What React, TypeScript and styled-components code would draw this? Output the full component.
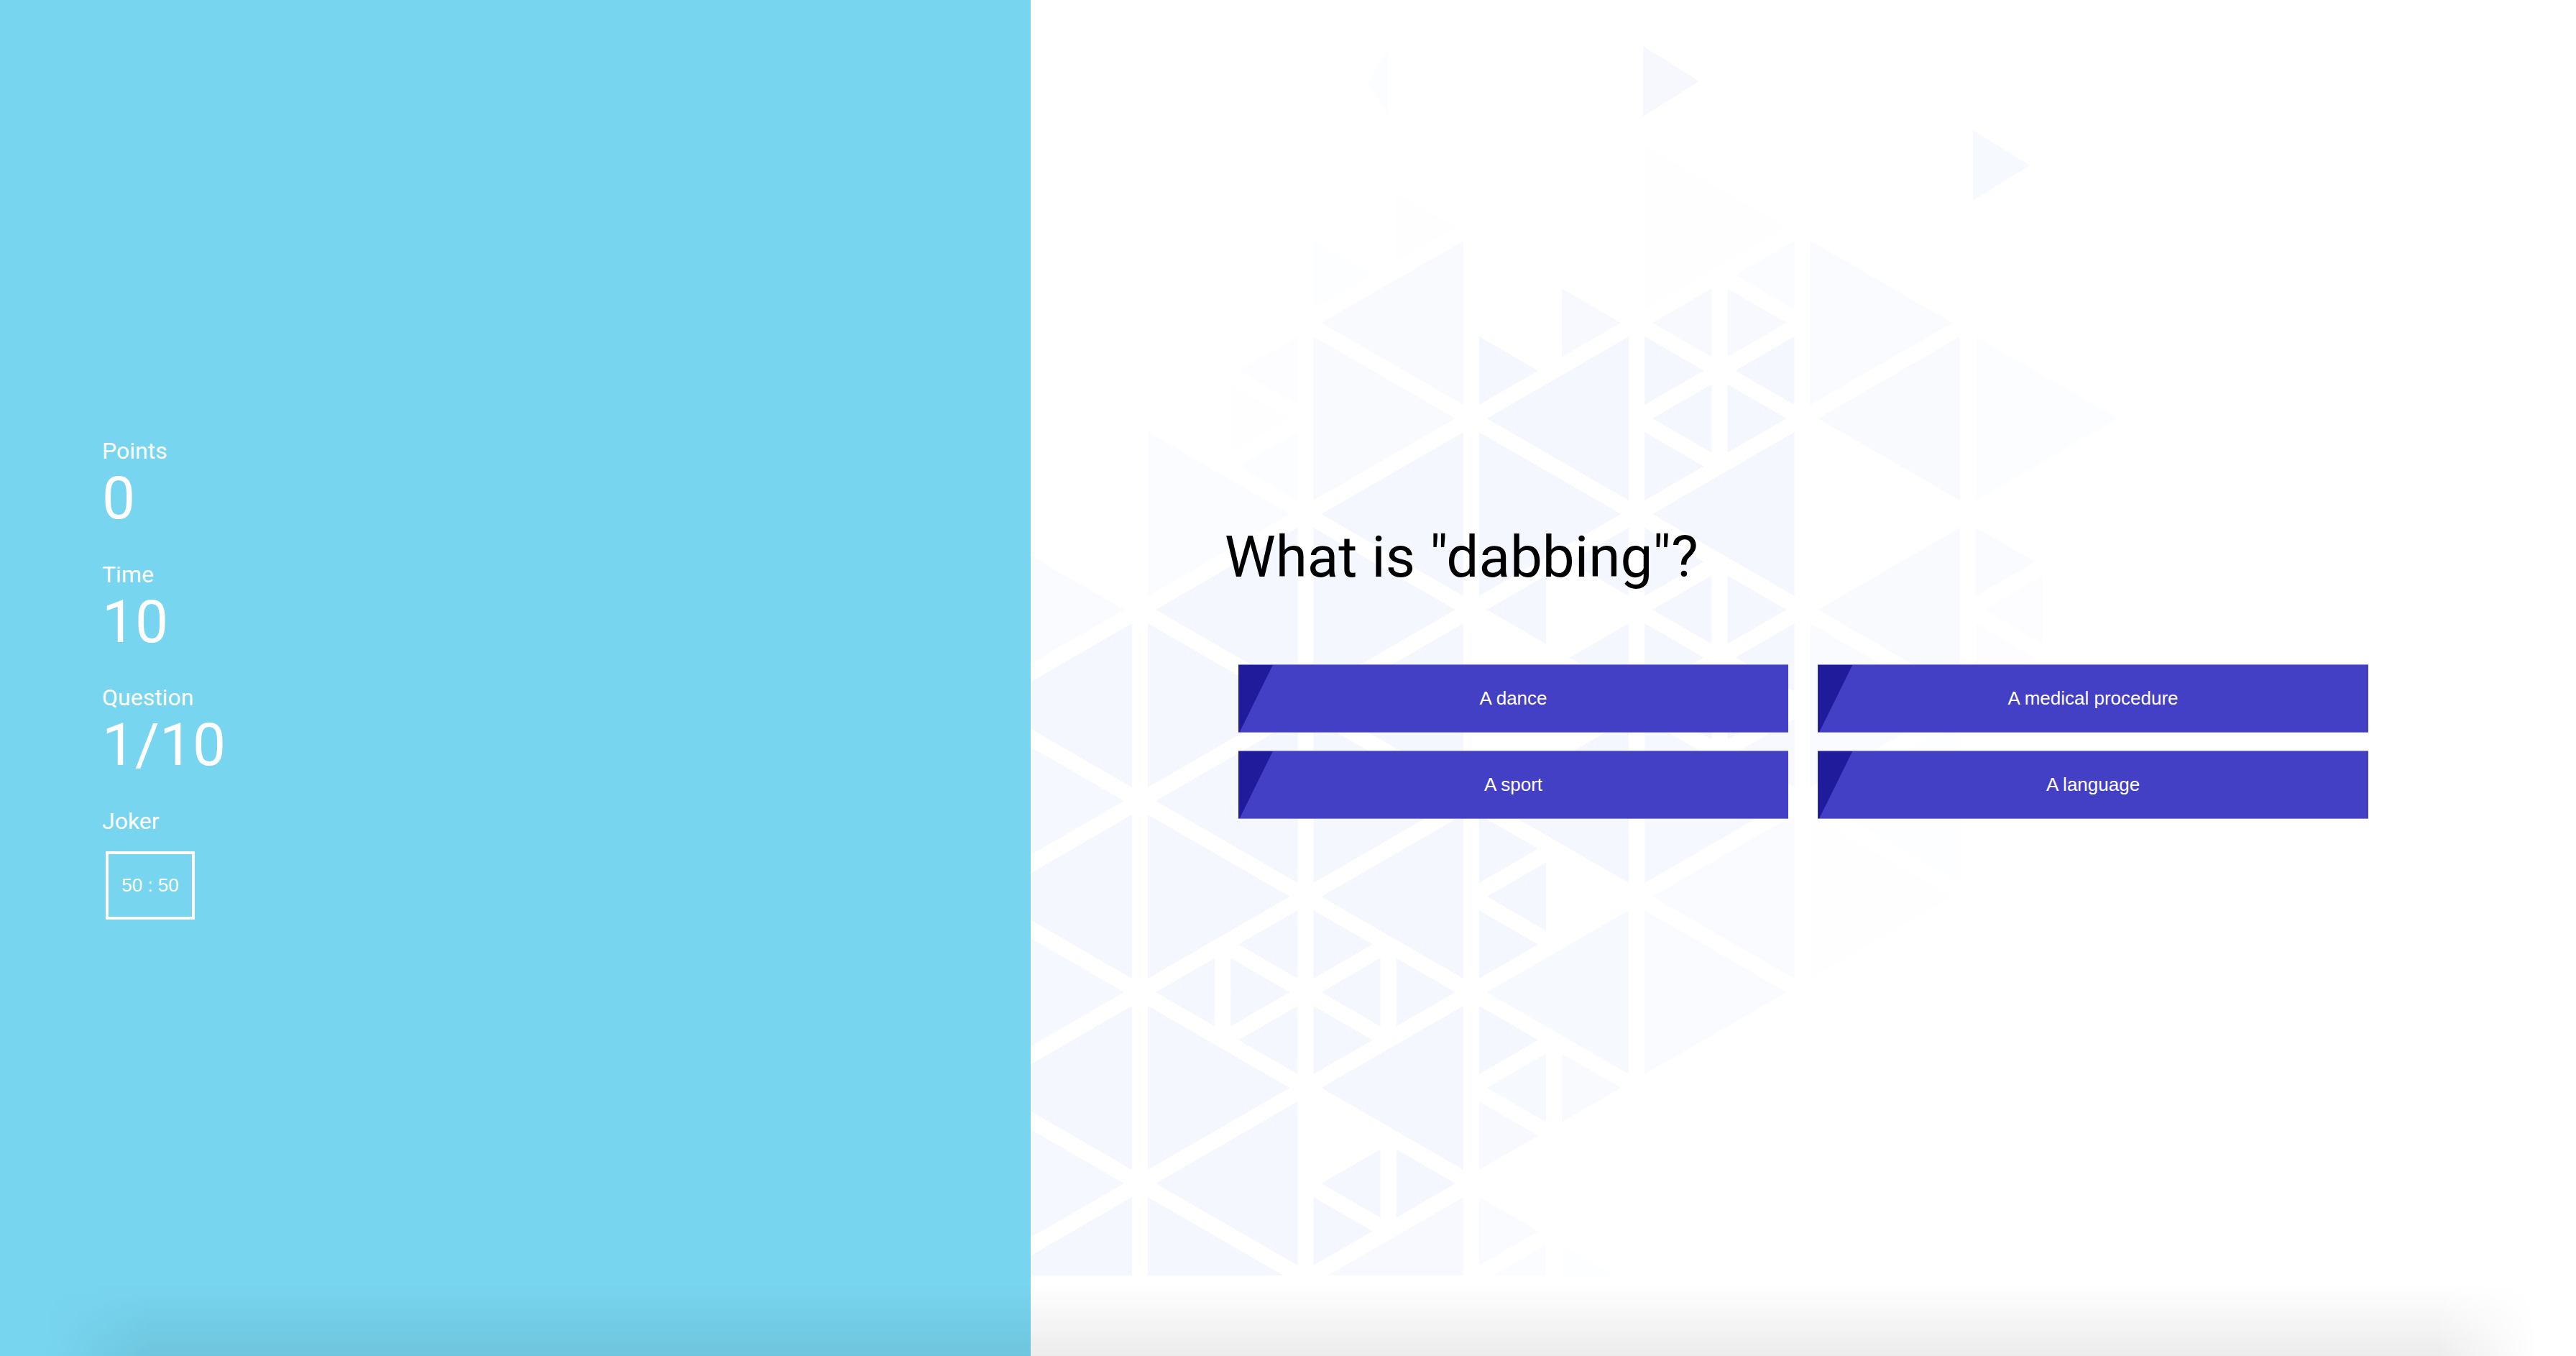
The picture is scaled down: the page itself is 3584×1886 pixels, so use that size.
import React, { useMemo } from "react";
import styled, { createGlobalStyle } from "styled-components";

const GlobalStyle = createGlobalStyle`
  html, body {
    margin: 0;
    padding: 0;
    height: 100%;
    overflow: hidden;
    background: #ffffff;
  }
  body {
    font-family: Roboto, "Liberation Sans", Arial, sans-serif;
  }
  #root {
    height: 100%;
  }
`;

const Page = styled.div`
  position: relative;
  display: flex;
  width: 100%;
  height: 100vh;
  overflow: hidden;
`;

const Sidebar = styled.aside`
  flex: 0 0 40%;
  box-sizing: border-box;
  display: flex;
  flex-direction: column;
  justify-content: center;
  padding-left: 142px;
  background: #78d5f0;
  color: #ffffff;
  font-family: Roboto, "Liberation Sans", Arial, sans-serif;
`;

const Stat = styled.div`
  display: flex;
  flex-direction: column;
  align-items: flex-start;
  & + & {
    margin-top: 38.5px;
  }
`;

const StatLabel = styled.div`
  font-size: 32px;
  line-height: 40px;
`;

const StatValue = styled.div`
  font-size: 82px;
  line-height: 93px;
`;

const JokerButton = styled.button`
  box-sizing: border-box;
  width: 124px;
  height: 95px;
  margin: 22px 0 0 5px;
  padding: 0;
  border: 4px solid #ffffff;
  background: transparent;
  color: #ffffff;
  font-family: "Liberation Sans", Arial, sans-serif;
  font-size: 26px;
  cursor: pointer;
`;

const Main = styled.main`
  position: relative;
  flex: 1;
  box-sizing: border-box;
  display: flex;
  flex-direction: column;
  align-items: center;
  justify-content: center;
  padding-bottom: 19px;
  overflow: hidden;
  background: #ffffff;
`;

const Backdrop = styled.svg`
  position: absolute;
  left: 0;
  top: 0;
  width: 100%;
  height: 100%;
  pointer-events: none;
`;

const Content = styled.div`
  position: relative;
  z-index: 1;
  width: 1606px;
`;

const Question = styled.h1`
  margin: 0 0 0 -2px;
  font-family: Roboto, "Liberation Sans", Arial, sans-serif;
  font-weight: 400;
  font-size: 80px;
  line-height: 94px;
  color: #000000;
`;

const Answers = styled.div`
  display: grid;
  grid-template-columns: 1fr 1fr;
  column-gap: 41px;
  row-gap: 25px;
  margin: 102px 17px 0;
`;

const AnswerButton = styled.button`
  position: relative;
  box-sizing: border-box;
  height: 95px;
  padding: 0;
  border: none;
  border-top: 1px solid #8581e0;
  border-bottom: 1px solid #8581e0;
  background: #4440c6;
  color: #ffffff;
  font-family: "Liberation Sans", Arial, sans-serif;
  font-size: 26px;
  cursor: pointer;
  overflow: hidden;

  &::before {
    content: "";
    position: absolute;
    left: 0;
    top: 0;
    bottom: 0;
    width: 48px;
    background: #201b9b;
    clip-path: polygon(0 0, 100% 0, 2px 100%, 0 100%);
  }
`;

const BottomShade = styled.div`
  position: absolute;
  left: 0;
  right: 0;
  bottom: 0;
  height: 100px;
  pointer-events: none;
  background: linear-gradient(to bottom, rgba(0, 0, 0, 0) 0%, rgba(0, 0, 0, 0.075) 100%);
  -webkit-mask-image: linear-gradient(to right, transparent 60px, #000 210px, #000 3390px, transparent 3530px);
  mask-image: linear-gradient(to right, transparent 60px, #000 210px, #000 3390px, transparent 3530px);
`;

type Pt = [number, number];
type Tri = { pts: Pt[]; o: number };

const X0 = 152;
const D = 230.4;
const S = 266;
const Y0 = 50;
const GAP = 11;

const lineX = (k: number) => X0 + D * k;
const vy = (k: number) => Y0 + (S / 2) * k;

const hash = (a: number, b: number, c: number) => {
  const v = Math.sin(a * 12.9898 + b * 78.233 + c * 37.719) * 43758.5453;
  return v - Math.floor(v);
};

const bigTri = (k: number, j: number, right: boolean): Pt[] => {
  if (right) {
    const y = vy(k) + S * j;
    return [
      [lineX(k), y],
      [lineX(k), y + S],
      [lineX(k + 1), y + S / 2],
    ];
  }
  const y = vy(k + 1) + S * j;
  return [
    [lineX(k + 1), y],
    [lineX(k + 1), y + S],
    [lineX(k), y + S / 2],
  ];
};

const mid = (a: Pt, b: Pt): Pt => [(a[0] + b[0]) / 2, (a[1] + b[1]) / 2];

const subdivide = (t: Pt[]): Pt[][] => {
  const [a, b, c] = t;
  const ab = mid(a, b);
  const bc = mid(b, c);
  const ac = mid(a, c);
  return [
    [a, ab, ac],
    [ab, b, bc],
    [ac, bc, c],
    [ab, bc, ac],
  ];
};

const inset = (t: Pt[], g: number): Pt[] => {
  const cx = (t[0][0] + t[1][0] + t[2][0]) / 3;
  const cy = (t[0][1] + t[1][1] + t[2][1]) / 3;
  const s = Math.hypot(t[0][0] - t[1][0], t[0][1] - t[1][1]);
  const r = s / (2 * Math.sqrt(3));
  const f = Math.max(0, (r - g) / r);
  return t.map(([x, y]) => [cx + (x - cx) * f, cy + (y - cy) * f] as Pt);
};

const centroid = (t: Pt[]): Pt => [
  (t[0][0] + t[1][0] + t[2][0]) / 3,
  (t[0][1] + t[1][1] + t[2][1]) / 3,
];

const clamp01 = (v: number) => Math.min(1, Math.max(0, v));

const interp = (pts: Pt[], y: number) => {
  if (y <= pts[0][0]) return pts[0][1];
  for (let i = 1; i < pts.length; i++) {
    if (y <= pts[i][0]) {
      const [y0, x0] = pts[i - 1];
      const [y1, x1] = pts[i];
      return x0 + ((x1 - x0) * (y - y0)) / (y1 - y0);
    }
  }
  return pts[pts.length - 1][1];
};

const RIGHT_EDGE: Pt[] = [
  [300, 1300],
  [700, 1580],
  [1300, 1150],
  [1800, 820],
];

const LEFT_EDGE: Pt[] = [
  [300, 320],
  [650, 260],
  [900, -250],
];

const strength = (x: number, y: number) => {
  const top = clamp01((y - 300) / 200);
  const right = clamp01((interp(RIGHT_EDGE, y) - x) / 380);
  const left = clamp01((x - interp(LEFT_EDGE, y)) / 260);
  return top * right * left;
};

const buildTriangles = (): Tri[] => {
  const out: Tri[] = [];
  for (let k = -2; k < 9; k++) {
    for (let j = -3; j < 9; j++) {
      for (const right of [true, false]) {
        const t = bigTri(k, j, right);
        const [cx, cy] = centroid(t);
        const o = strength(cx, cy);
        if (o <= 0.04) continue;
        const h = hash(k, j, right ? 1 : 2);
        if (h < 0.1) continue;
        if (h > 0.7) {
          subdivide(t).forEach((st, i) => {
            const [sx, sy] = centroid(st);
            const so = strength(sx, sy);
            if (so <= 0.04) return;
            if (hash(k * 3 + i, j * 5 + i, right ? 7 : 9) < 0.12) return;
            out.push({ pts: inset(st, GAP), o: so });
          });
        } else {
          out.push({ pts: inset(t, GAP), o });
        }
      }
    }
  }
  out.push({ pts: [[852, 64], [852, 162], [930, 113]], o: 0.9 });
  out.push({ pts: [[1311, 181], [1311, 279], [1390, 230]], o: 0.85 });
  out.push({ pts: [[497, 69], [497, 161], [469, 115]], o: 0.3 });
  return out;
};

const TrianglePattern: React.FC = () => {
  const tris = useMemo(buildTriangles, []);
  return (
    <Backdrop aria-hidden="true">
      <defs>
        <clipPath id="pattern-clip">
          <rect x="0" y="0" width="2200" height="1774" />
        </clipPath>
      </defs>
      <g clipPath="url(#pattern-clip)" fill="#e1e9fc">
        {tris.map((t, i) => (
          <polygon
            key={i}
            points={t.pts.map((p) => `${p[0].toFixed(1)},${p[1].toFixed(1)}`).join(" ")}
            fillOpacity={(0.34 * t.o).toFixed(3)}
          />
        ))}
      </g>
    </Backdrop>
  );
};

const stats = [
  { label: "Points", value: "0" },
  { label: "Time", value: "10" },
  { label: "Question", value: "1/10" },
];

const answers = ["A dance", "A medical procedure", "A sport", "A language"];

export default function App() {
  return (
    <>
      <GlobalStyle />
      <Page>
        <Sidebar>
          {stats.map((s) => (
            <Stat key={s.label}>
              <StatLabel>{s.label}</StatLabel>
              <StatValue>{s.value}</StatValue>
            </Stat>
          ))}
          <Stat>
            <StatLabel>Joker</StatLabel>
            <JokerButton type="button">50 : 50</JokerButton>
          </Stat>
        </Sidebar>
        <Main>
          <TrianglePattern />
          <Content>
            <Question>What is "dabbing"?</Question>
            <Answers>
              {answers.map((a) => (
                <AnswerButton key={a} type="button">
                  {a}
                </AnswerButton>
              ))}
            </Answers>
          </Content>
        </Main>
        <BottomShade />
      </Page>
    </>
  );
}
